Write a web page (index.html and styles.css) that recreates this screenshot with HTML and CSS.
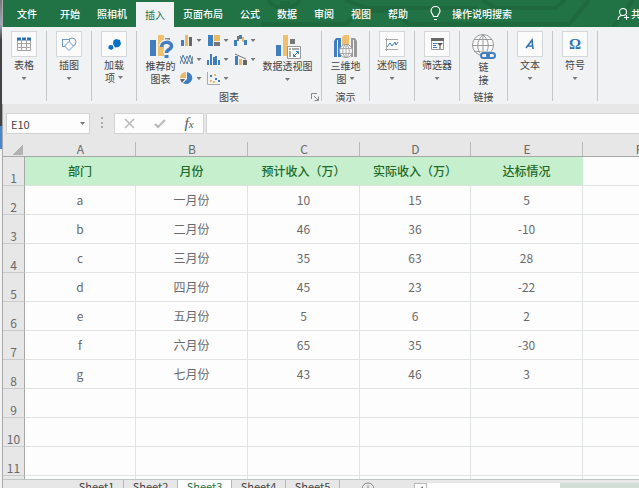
FILE: index.html
```
<!DOCTYPE html>
<html lang="zh-CN">
<head>
    <meta charset="UTF-8">
    <meta name="viewport" content="width=device-width, initial-scale=1.0">
    <title>Excel</title>
    <link rel="stylesheet" href="styles.css">
</head>
<body>
    <div class="desktop"></div>
    <div class="app">
        <nav class="menu">
            <svg class="circuit" width="640" height="27" fill="none" stroke="#1f693f" stroke-width="4">
                <path d="M258 24h85l14-13h34l15 13h160l20-24M342 0l22 8h110M480 0l12 8h60l10-8M610 27l20-27M265 0a20 20 0 0 0 32 0"/>
                <path d="M279 3l9 8M279 10V3h8"/>
            </svg>
            <button>文件</button>
            <button>开始</button>
            <button>照相机</button>
            <button class="active">插入</button>
            <button>页面布局</button>
            <button>公式</button>
            <button>数据</button>
            <button>审阅</button>
            <button>视图</button>
            <button>帮助</button>
            <button class="tell-me">
                <svg width="11" height="15" fill="none" stroke="#fff" stroke-width="1.2"><path d="M3.500 10.500C3.500 8.500 1 7.500 1 5a4.500 4.500 0 0 1 9 0c0 2.500-2.500 3.500-2.500 5.500zM4 13.500h3"/></svg>
                操作说明搜索
            </button>
            <button class="share">
                <svg width="13" height="14" fill="none" stroke="#fff" stroke-width="1.100"><circle cx="6" cy="5" r="3.500"/><path d="M1 13c0-3 2-4.500 4.500-4.500M9.500 8v5M7 10.500h5"/></svg>
                共享
            </button>
        </nav>

        <div class="ribbon">
            <section class="group">
                <button class="tool">
                    <span class="tile">
                        <svg width="14" height="14" fill="none"><path stroke="#a5a5a5" d="M.5 3v10.500h13V3M.5 6.500h13M.5 10.500h13M4.500 3v10M9.500 3v10"/><path d="M0 2h14" stroke="#2f6fb0" stroke-width="3" stroke-dasharray="4 1"/></svg>
                    </span>
                    表格
                    <i class="arrow"></i>
                </button>
            </section>
            <section class="group">
                <button class="tool">
                    <span class="tile">
                        <svg width="15" height="14" fill="#fbfbfb" stroke="#6f9bc8"><circle cx="10" cy="5" r="4"/><rect x=".5" y="2.500" width="7" height="7"/><path d="M7 4.500l4.500 4.500L7 13.500 2.500 9z"/></svg>
                    </span>
                    插图
                    <i class="arrow"></i>
                </button>
            </section>
            <section class="group">
                <button class="tool">
                    <span class="tile">
                        <svg width="13" height="13" fill="#0c6fc6"><path d="M8 1l4 1 1 4-2 3-4 .5L5 6l.5-3.500zM2 7l3 .5.500 3L3 12 .5 10.500V8z"/></svg>
                    </span>
                    加载
                    <span class="line">项 <i class="arrow"></i></span>
                </button>
            </section>

            <section class="group charts">
                <div class="row">
                    <button class="tool big">
                        <svg width="26" height="25"><path fill="#3f7fbf" d="M2 6h6v16H2z"/><path fill="#f0bf70" d="M10 1h6v21h-6z"/><path fill="#888" d="M17 4h5v3h-5z"/><path d="M14 12c0-5 9-5 9 0 0 4-5 3-5 7" fill="none" stroke="#f1f2f4" stroke-width="6"/><path d="M13.500 13c0-6 10-6 10-1 0 4-5 3-5 7" fill="none" stroke="#3f7fbf" stroke-width="3.500"/><path fill="#3f7fbf" d="M16.500 21h4v3h-4z"/></svg>
                        推荐的<br>图表
                    </button>
                    <div class="chart-types">
                        <button aria-label="柱形图"><svg width="13" height="13"><path fill="#3f7fbf" d="M1 6h3v6H1z"/><path fill="#e9b968" d="M5 1h3v11H5z"/><path fill="#666" d="M9 3h3v9H9z"/></svg><i class="arrow"></i></button>
                        <button aria-label="树状图"><svg width="13" height="13"><path fill="#3f7fbf" d="M1 1h5v11H1z"/><path fill="#e9b968" d="M7 1h6v6H7z"/><path fill="#777" d="M7 8h6v4H7z"/></svg><i class="arrow"></i></button>
                        <button aria-label="瀑布图"><svg width="13" height="13"><path fill="#3f7fbf" d="M0 6h3v6H0zM5 1h3v4H5z"/><path fill="#777" d="M3 2h2v5H3z"/><path fill="#e9b968" d="M8 3h2v5H8z"/><path fill="#3f7fbf" d="M10 6h3v5h-3z"/></svg><i class="arrow"></i></button>
                        <button aria-label="折线图"><svg width="13" height="13" fill="none"><path stroke="#777" d="M0 3l4 8 3-8 4 8 2-8"/><path stroke="#3f7fbf" d="M0 11l3-9 4 9 3-9 3 9"/></svg><i class="arrow"></i></button>
                        <button aria-label="直方图"><svg width="13" height="13" fill="#3f7fbf"><path d="M0 7h2v5H0zM3 1h2v11H3zM6 4h2v8H6zM8 3h2v9H8zM11 7h2v5h-2z"/></svg><i class="arrow"></i></button>
                        <button aria-label="组合图"><svg width="13" height="13"><path fill="#3f7fbf" d="M1 3h3v9H1z"/><path fill="#e9b968" d="M5 6h3v6H5z"/><path fill="#666" d="M9 7h4v5H9z"/><path fill="none" stroke="#777" d="M1 1l11 5"/></svg><i class="arrow"></i></button>
                        <button aria-label="饼图"><svg width="13" height="13"><path fill="#3f7fbf" d="M7 0a6 6 0 1 1-4 11l4-4z"/><path fill="#e9b968" d="M6 0v6H0a6 6 0 0 1 6-6z"/><path fill="#666" d="M0 7h5l-3 4z"/></svg><i class="arrow"></i></button>
                        <button aria-label="散点图"><svg width="13" height="13"><path fill="none" stroke="#aaa" d="M.5 0v12.500H13"/><path fill="#3f7fbf" d="M3 3h2v2H3zM8 6h2v2H8zM11 8h2v2h-2z"/><path fill="#e9b968" d="M3 8h2v2H3zM7 2h2v2H7zM6 9h2v2H6z"/></svg><i class="arrow"></i></button>
                    </div>
                    <button class="tool big pivot">
                        <svg width="26" height="25"><path fill="#3f7fbf" d="M1 11h5v11H1z"/><path fill="#f0bf70" d="M8 1h5v21H8z"/><path fill="#777" d="M15 5h5v5h-5z"/><path fill="#fff" stroke="#999" d="M12.500 12.500h13v12h-13z"/><path fill="#aaa" d="M14 14h2v2h-2zM17 14h7v2h-7zM14 17h2v6h-2z"/><path fill="none" stroke="#3f7fbf" d="M18.500 22.500l5-5M21 17.500h2.500V20M18.500 20v2.500H21"/></svg>
                        数据透视图
                        <i class="arrow"></i>
                    </button>
                </div>
                <footer>图表</footer>
                <svg class="launcher" width="8" height="8" fill="none" stroke="#888"><path d="M.5 6V.5H6M3 3l4 4M7.500 3.500v4h-4"/></svg>
            </section>

            <section class="group tour">
                <button class="tool big">
                    <svg width="24" height="25"><path fill="#3f7fbf" d="M0 7l2-3h5v19H0z"/><path fill="#f0bf70" d="M8 3l2-2h5v20H8z"/><path fill="#999" d="M17 4h4l2 3v16h-6z"/><path stroke="#f1f2f4" d="M3.500 6v17M19.500 6v17"/><circle cx="12" cy="17" r="6.500" fill="#fafafa" stroke="#999"/><path fill="none" stroke="#aaa" d="M6 14.500h12M6 19.500h12M12 11v12M11 11c-3 4-3 8 0 12M13 11c3 4 3 8 0 12"/></svg>
                    三维地
                    <span class="line">图 <i class="arrow"></i></span>
                </button>
                <footer>演示</footer>
            </section>

            <section class="group">
                <button class="tool">
                    <span class="tile">
                        <svg width="14" height="13" fill="none"><path stroke="#aaa" d="M1.500 0v13M0 1.500h13M0 11.500h13"/><path stroke="#3f7fbf" d="M2 9l3-4 2 3 3-4 1 3 2-3"/></svg>
                    </span>
                    迷你图
                    <i class="arrow"></i>
                </button>
            </section>
            <section class="group">
                <button class="tool">
                    <span class="tile">
                        <svg width="13" height="13" fill="none"><path stroke="#999" d="M.5.500h12v11H.5z"/><path fill="#666" d="M0 0h13v3H0z"/><path stroke="#3f7fbf" d="M2 5.500h4M2 7.500h3M2 9.500h4"/><path fill="#555" d="M6 5h6L9.500 7.500V11h-1V7.500z"/></svg>
                    </span>
                    筛选器
                    <i class="arrow"></i>
                </button>
            </section>

            <section class="group links">
                <button class="tool big">
                    <svg width="26" height="26" fill="none" stroke="#999"><circle cx="12" cy="11" r="10.500" fill="#fafafa"/><path d="M3 5.500h18M1.500 11.500h21M3 17.500h18M12 1v21M12 1C5 6 5 17 12 22M12 1c7 5 7 16 0 21"/><path d="M9 21.500h16" stroke="#f1f2f4" stroke-width="8"/><g stroke="#3f7fbf" stroke-width="2"><rect x="10" y="19" width="8" height="5" rx="2.500"/><rect x="16" y="19" width="8" height="5" rx="2.500"/></g></svg>
                    链<br>接
                </button>
                <footer>链接</footer>
            </section>

            <section class="group">
                <button class="tool">
                    <span class="tile">
                        <svg width="10" height="12" fill="none" stroke="#2f74b5" stroke-width="1.600"><path d="M1 10l6-8 1 9M3 8h5"/></svg>
                    </span>
                    文本
                    <i class="arrow"></i>
                </button>
            </section>
            <section class="group">
                <button class="tool">
                    <span class="tile omega">Ω</span>
                    符号
                    <i class="arrow"></i>
                </button>
            </section>
        </div>

        <div class="formula-bar">
            <div class="name-box">
                <input type="text" value="E10" aria-label="名称框">
                <i class="arrow"></i>
            </div>
            <span class="dots"></span>
            <div class="actions">
                <button aria-label="取消"><svg width="11" height="11" fill="none" stroke="#b8b8b8" stroke-width="1.500"><path d="M1 1l9 9M10 1l-9 9"/></svg></button>
                <button aria-label="输入"><svg width="12" height="10" fill="none" stroke="#b8b8b8" stroke-width="2"><path d="M1 5l3 3 7-7"/></svg></button>
                <button class="fx">f<small>x</small></button>
            </div>
            <input class="formula" type="text" aria-label="编辑栏">
        </div>

        <div class="sheet">
            <table>
                <colgroup>
                    <col class="num">
                    <col class="odd"><col><col><col class="odd"><col><col><col>
                </colgroup>
                <thead>
                    <tr><th class="corner"></th><th>A</th><th>B</th><th>C</th><th>D</th><th>E</th><th>F</th><th>G</th></tr>
                </thead>
                <tbody>
                    <tr class="title"><th>1</th><td>部门</td><td>月份</td><td>预计收入（万）</td><td>实际收入（万）</td><td>达标情况</td><td></td><td></td></tr>
                    <tr><th>2</th><td>a</td><td>一月份</td><td>10</td><td>15</td><td>5</td><td></td><td></td></tr>
                    <tr><th>3</th><td>b</td><td>二月份</td><td>46</td><td>36</td><td>-10</td><td></td><td></td></tr>
                    <tr><th>4</th><td>c</td><td>三月份</td><td>35</td><td>63</td><td>28</td><td></td><td></td></tr>
                    <tr><th>5</th><td>d</td><td>四月份</td><td>45</td><td>23</td><td>-22</td><td></td><td></td></tr>
                    <tr><th>6</th><td>e</td><td>五月份</td><td>5</td><td>6</td><td>2</td><td></td><td></td></tr>
                    <tr><th>7</th><td>f</td><td>六月份</td><td>65</td><td>35</td><td>-30</td><td></td><td></td></tr>
                    <tr><th>8</th><td>g</td><td>七月份</td><td>43</td><td>46</td><td>3</td><td></td><td></td></tr>
                    <tr><th>9</th><td></td><td></td><td></td><td></td><td></td><td></td><td></td></tr>
                    <tr><th>10</th><td></td><td></td><td></td><td></td><td></td><td></td><td></td></tr>
                    <tr><th>11</th><td></td><td></td><td></td><td></td><td></td><td></td><td></td></tr>
                    <tr><th></th><td></td><td></td><td></td><td></td><td></td><td></td><td></td></tr>
                </tbody>
            </table>
        </div>

        <div class="sheet-bar">
            <button>Sheet1</button>
            <button>Sheet2</button>
            <button class="current">Sheet3</button>
            <button>Sheet4</button>
            <button>Sheet5</button>
            <button class="add" aria-label="新工作表"><svg width="14" height="14" fill="none" stroke="#888"><circle cx="7" cy="7" r="6"/><path d="M7 3.500v7M3.500 7h7"/></svg></button>
            <div class="scroll">
                <button aria-label="向左滚动"><svg width="5" height="8" fill="#777"><path d="M5 0v8L0 4z"/></svg></button>
                <div class="thumb"></div>
            </div>
        </div>
    </div>
</body>
</html>
```
FILE: styles.css
```
* {
    box-sizing: border-box;
}
body {
    display: flex;
    height: 100vh;
    margin: 0;
    overflow: hidden;
    font-family: "Noto Sans CJK SC", sans-serif;
    font-size: 10px;
    color: #444;
}
button {
    padding: 0;
    border: none;
    background: none;
    font: inherit;
    color: inherit;
}
input {
    min-width: 0;
    border: none;
    font: inherit;
    color: inherit;
}
svg {
    display: block;
    flex: none;
}
.desktop {
    width: 3px;
    flex: none;
    border-right: 1px solid #aaa;
    background: linear-gradient(#777 0, #9ab 24px, #444 40px, #444 126px, #4a86d0 126px, #4a86d0 149px, #f3f3f3 149px);
}
.app {
    display: flex;
    flex-direction: column;
    flex: 1;
    min-width: 0;
    background: #e6e7e6;
}

/* menu tabs */
.menu {
    position: relative;
    display: flex;
    gap: 1px;
    height: 27px;
    padding-left: 6px;
    flex: none;
    overflow: hidden;
    background: #217346;
    color: #fff;
    font-weight: 500;
}
.circuit {
    position: absolute;
    top: 0;
    left: 0;
}
.menu button {
    position: relative;
    padding: 0 8px;
    white-space: nowrap;
}
.menu button:first-of-type {
    margin-right: 6px;
}
.menu .active {
    align-self: flex-end;
    height: 25px;
    padding: 0 9px;
    background: #f1f2f4;
    color: #217346;
    font-weight: 400;
}
.menu .tell-me {
    display: flex;
    align-items: center;
    gap: 11px;
    margin-left: 5px;
}
.menu .share {
    display: flex;
    align-items: center;
    gap: 1px;
    margin-left: auto;
    margin-right: -20px;
}

/* ribbon */
.ribbon {
    display: flex;
    height: 77px;
    padding: 4px 0 3px;
    margin-left: -1px;
    flex: none;
    background: #f1f2f4;
    line-height: 13px;
}
.group {
    position: relative;
    display: flex;
    flex-direction: column;
    align-items: center;
    width: 45px;
    flex: none;
    border-right: 1px solid #c3c7c5;
}
.charts {
    width: 185px;
}
.tour,
.links {
    width: 48px;
}
.tool {
    display: flex;
    flex-direction: column;
    align-items: center;
    white-space: nowrap;
}
.tile {
    display: flex;
    align-items: center;
    justify-content: center;
    width: 26px;
    height: 26px;
    margin-bottom: 1px;
    border: 1px solid #d4d7d9;
    background: #fbfbfb;
}
.omega {
    color: #2f74b5;
    font-family: "Liberation Serif", serif;
    font-size: 15px;
    font-weight: bold;
}
.big {
    padding-top: 3px;
}
.arrow {
    display: inline-block;
    flex: none;
    width: 5px;
    height: 3px;
    background: #777;
    clip-path: polygon(0 0, 100% 0, 50% 100%);
}
.tool > .arrow {
    margin-top: 6px;
}
.line {
    display: flex;
    align-items: center;
    gap: 3px;
}
.row {
    display: flex;
    gap: 3px;
}
.chart-types {
    display: grid;
    grid-template-columns: repeat(3, 27px);
    grid-auto-rows: 19px;
}
.chart-types button {
    display: flex;
    align-items: center;
    gap: 4px;
    padding-left: 1px;
}
.group footer {
    margin-top: auto;
    margin-bottom: -2px;
}
.launcher {
    position: absolute;
    right: 2px;
    bottom: 0;
}

/* formula bar */
.formula-bar {
    display: flex;
    height: 30px;
    padding-top: 9px;
    flex: none;
}
.name-box,
.actions,
.formula {
    height: 21px;
    border: 1px solid #d2d4d3;
    background: #fdfdfd;
}
.name-box {
    display: flex;
    align-items: center;
    width: 84px;
    margin-left: 3px;
    padding-right: 4px;
}
.name-box input {
    flex: 1;
    height: 17px;
    padding: 0 4px;
    background: none;
    font-size: 11px;
}
.dots {
    height: 11px;
    margin: 4px 11px 0;
    border-left: 2px dotted #aaa;
}
.actions {
    display: flex;
    align-items: center;
    justify-content: space-around;
    width: 90px;
}
.fx {
    color: #555;
    font: italic 15px "Liberation Serif", serif;
}
.fx small {
    font-size: 11px;
}
.formula {
    flex: 1;
    margin-left: 2px;
    border-right: none;
}

/* cells */
.sheet {
    flex: 1;
    min-height: 0;
    overflow: hidden;
    background: #fdfdfd;
}
table {
    width: 100%;
    table-layout: fixed;
    border-collapse: separate;
    border-spacing: 0;
    font-size: 12px;
}
col {
    width: 112px;
}
.num {
    width: 22px;
}
.odd {
    width: 111px;
}
th,
td {
    height: 29px;
    padding: 0;
    border-right: 1px solid #dfe3e2;
    border-bottom: 1px solid #dfe3e2;
    line-height: 16px;
    text-align: center;
    color: #6a6a6a;
}
th {
    background: #e6e7e6;
    font-weight: 400;
}
thead th {
    height: 23px;
    padding-top: 8px;
    border-right: none;
    border-bottom-color: #a5a8a6;
    background: linear-gradient(#b8bbb9, #b8bbb9) right bottom / 1px 14px no-repeat #e6e7e6;
    line-height: 14px;
}
tbody th {
    padding-top: 14px;
    border-right-color: #a5a8a6;
    border-bottom-color: #c9cccb;
    line-height: 14px;
    vertical-align: bottom;
}
thead .corner {
    background: linear-gradient(135deg, transparent 50%, #b2b4b3 50%) 10px 11px / 10px 10px no-repeat #e6e7e6;
}
.title td {
    font-weight: 500;
    color: #1c6b2a;
}
.title td:nth-child(-n+6) {
    border-right-color: #c6efce;
    background: #c6efce;
}

/* sheet tabs */
.sheet-bar {
    display: flex;
    align-items: flex-start;
    height: 9px;
    padding-left: 67px;
    flex: none;
    overflow: hidden;
    border-top: 1px solid #c0c6c3;
    font-size: 11px;
    line-height: 12px;
}
.sheet-bar > button {
    width: 54px;
    border-right: 1px solid #b5b8b6;
}
.sheet-bar .current {
    background: #fdfdfd;
    color: #217346;
}
.sheet-bar .add {
    width: auto;
    margin: 2px 0 0 21px;
    border: none;
}
.scroll {
    display: flex;
    flex: 1;
    height: 14px;
    margin: 3px 0 0 39px;
    background: #d3ddd8;
}
.scroll button {
    padding: 2px 3px;
    border: 1px solid #b5b8b6;
    background: #fdfdfd;
}
.thumb {
    width: 59%;
    background: #fdfdfd;
}
```
